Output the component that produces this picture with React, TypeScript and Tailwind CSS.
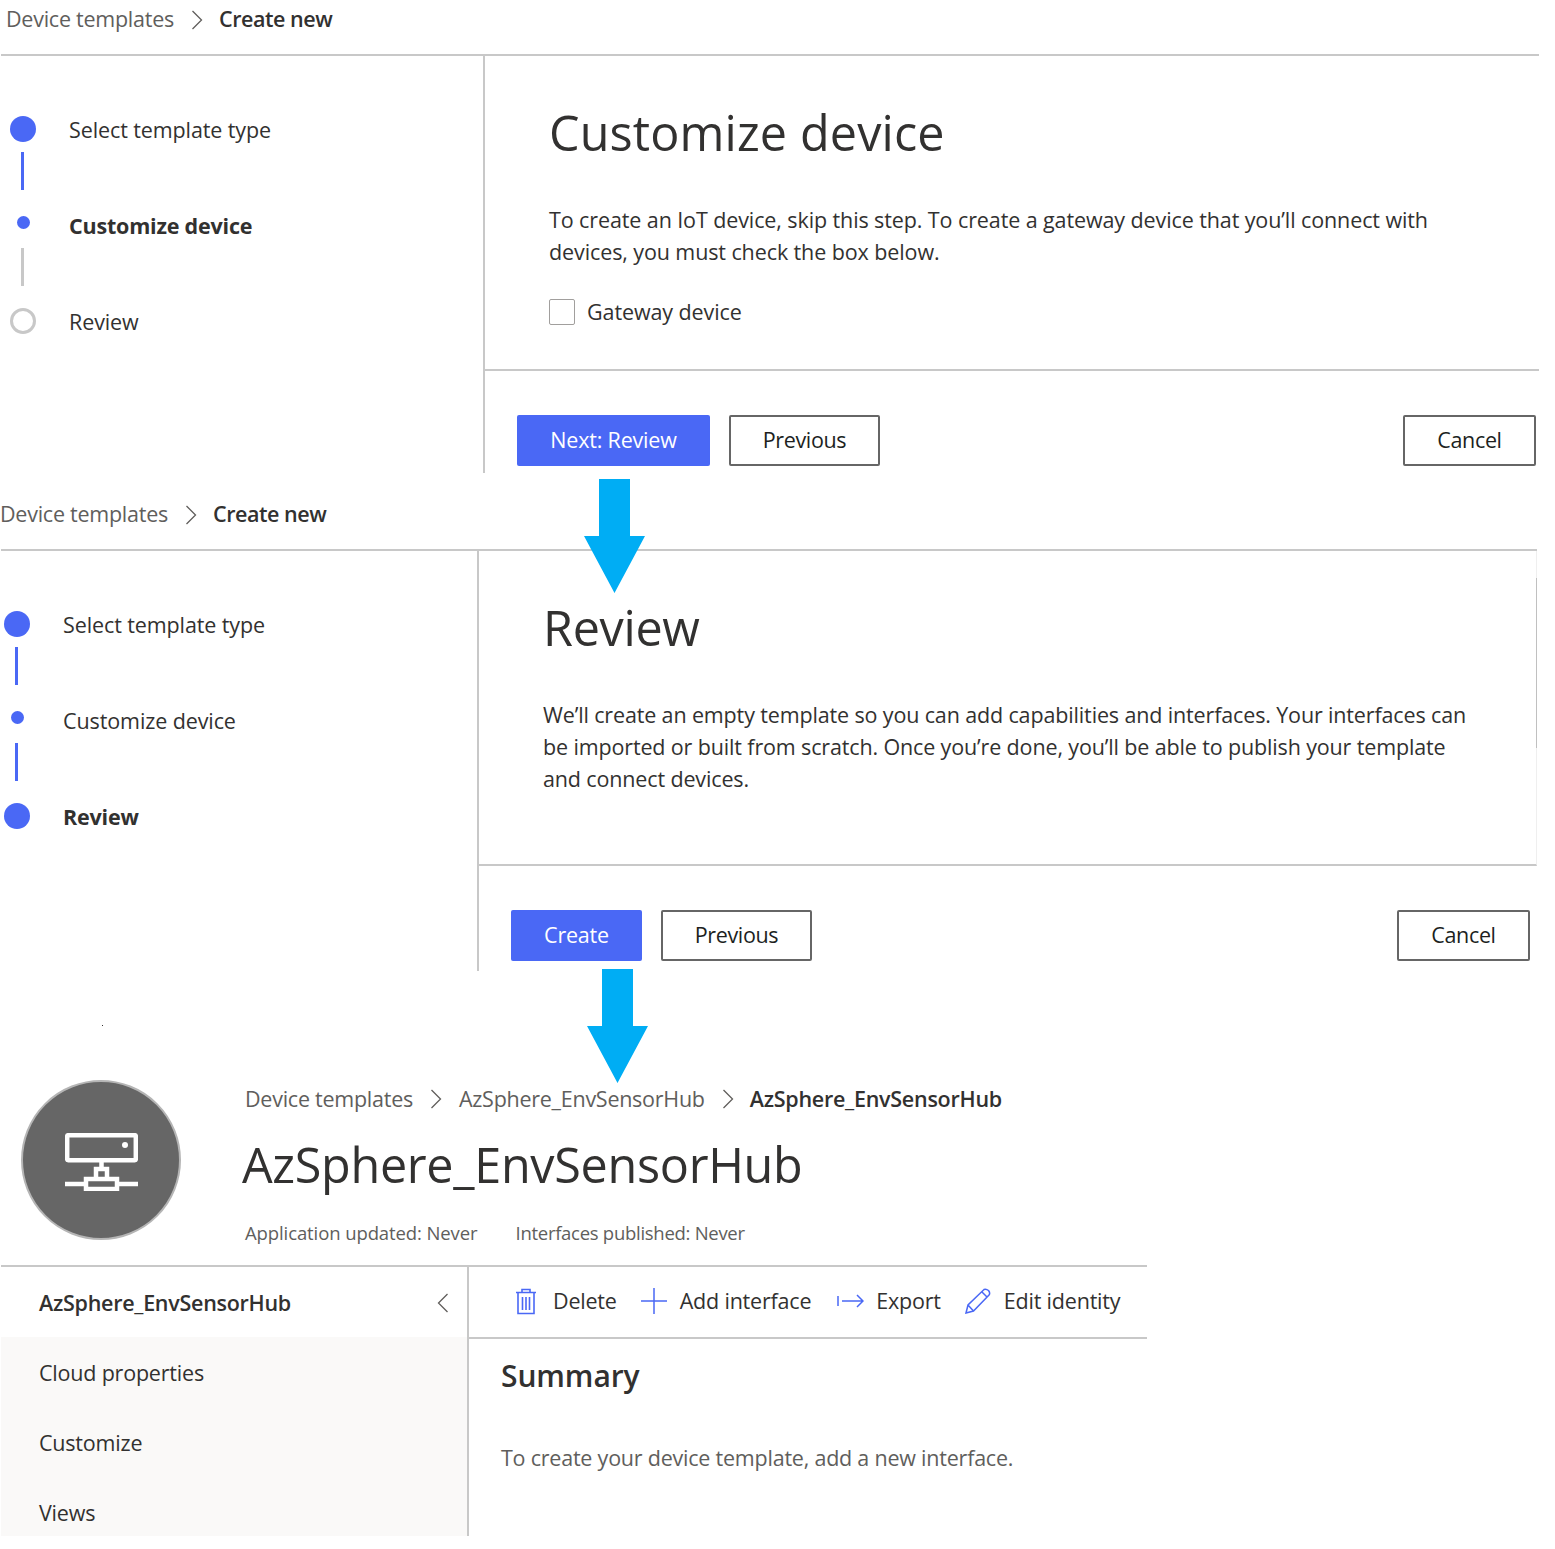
import type { ReactNode } from "react";

const font = "font-['Open_Sans','Noto_Sans',sans-serif]";

function Chevron({ className = "" }: { className?: string }) {
  return (
    <svg width="12" height="20" viewBox="0 0 12 20" fill="none" stroke="#605e5c" strokeWidth="1.3" className={className}>
      <path d="M1.5 1 L10.5 10 L1.5 19" />
    </svg>
  );
}

function Crumbs() {
  return (
    <div className="flex h-[54px] items-center pb-[15px] text-[21.5px]">
      <span className="tracking-[-0.25px] text-[#605e5c]">Device templates</span>
      <Chevron className="ml-[17px] mr-[16px]" />
      <span className="font-semibold tracking-[-0.45px] text-[#323130]">Create new</span>
    </div>
  );
}

function Line({ on }: { on: boolean }) {
  return <div className={`mb-[22px] ml-[11px] mt-[10px] h-[38px] w-[3px] ${on ? "bg-[#4a68f5]" : "bg-[#c8c8c8]"}`} />;
}

function Step({ dot, label, bold }: { dot: ReactNode; label: string; bold?: boolean }) {
  return (
    <div className="flex h-[26px] items-center">
      <div className="flex w-[26px] items-center justify-center">{dot}</div>
      <span className={`ml-[33px] mt-[2px] text-[21.5px] text-[#323130] ${bold ? "font-bold tracking-[-0.2px]" : "tracking-[-0.1px]"}`}>{label}</span>
    </div>
  );
}

const bigDot = <div className="h-[26px] w-[26px] rounded-full bg-[#4a68f5]" />;
const smallDot = <div className="mb-[6px] h-[13px] w-[13px] rounded-full bg-[#4a68f5]" />;
const ring = <div className="h-[26px] w-[26px] rounded-full border-[3px] border-[#c8c8c8]" />;

function Btn({ children, primary, className = "" }: { children: ReactNode; primary?: boolean; className?: string }) {
  return (
    <div
      className={`flex h-[51px] items-center justify-center rounded-[2px] text-[21.5px] ${
        primary ? "bg-[#4a68f5] tracking-[-0.2px] text-white" : "border-2 border-[#666666] tracking-[-0.35px] text-[#201f1e]"
      } ${className}`}
    >
      {children}
    </div>
  );
}

function Wizard({
  shift,
  width,
  railWidth,
  bodyHeight,
  footerPad,
  steps,
  title,
  titleClass,
  children,
  primary,
  primaryWidth,
  rightBorder,
}: {
  shift: string;
  width: string;
  railWidth: string;
  bodyHeight: string;
  footerPad: string;
  steps: ReactNode;
  title: string;
  titleClass: string;
  children: ReactNode;
  primary: string;
  primaryWidth: string;
  rightBorder?: boolean;
}) {
  return (
    <div className={width}>
      <div className={shift}>
        <Crumbs />
      </div>
      <div className={`ml-px flex border-t-2 border-[#c8c8c8] ${bodyHeight}`}>
        <div className={`${shift} -ml-px ${railWidth} shrink-0 pt-[60px]`}>{steps}</div>
        <div className="flex min-w-0 flex-1 flex-col border-l-2 border-[#c8c8c8]">
          <div className={`h-[315px] border-b-2 border-[#c8c8c8] pl-[64px] ${rightBorder ? "border-r border-r-[#efefef]" : ""}`}>
            <h1 className={`mt-[36px] text-[48.5px] leading-[80px] text-[#323130] ${titleClass}`}>{title}</h1>
            {children}
          </div>
          <div className={`flex items-start pl-[32px] pt-[44px] ${footerPad}`}>
            <Btn primary className={primaryWidth}>{primary}</Btn>
            <Btn className="ml-[19px] w-[151px]">Previous</Btn>
            <Btn className="ml-auto w-[133px]">Cancel</Btn>
          </div>
        </div>
      </div>
    </div>
  );
}

function DownArrow({ className }: { className: string }) {
  return (
    <svg width="62" height="115" viewBox="0 0 62 115" className={`absolute ${className}`}>
      <polygon points="15,0 46,0 46,57 61,57 30.5,114 0,57 15,57" fill="#00adf4" />
    </svg>
  );
}

function ToolBtn({ icon, label, className = "" }: { icon: ReactNode; label: string; className?: string }) {
  return (
    <div className={`flex items-center ${className}`}>
      {icon}
      <span className="text-[21.5px] tracking-[-0.2px] text-[#323130]">{label}</span>
    </div>
  );
}

export default function App() {
  return (
    <div className={`relative h-[1549px] w-[1555px] overflow-hidden bg-white ${font}`}>
      <Wizard
        shift="pl-[6px]"
        width="w-[1539px]"
        railWidth="w-[483px]"
        bodyHeight="h-[419px]"
        footerPad="pr-[3px]"
        title="Customize device"
        titleClass="tracking-[0.14px]"
        primary="Next: Review"
        primaryWidth="w-[193px]"
        steps={
          <div className="pl-[4px]">
            <Step dot={bigDot} label="Select template type" />
            <Line on />
            <Step dot={smallDot} label="Customize device" bold />
            <Line on={false} />
            <Step dot={ring} label="Review" />
          </div>
        }
      >
        <p className="mt-[32px] w-[900px] text-[21.5px] leading-[32px] tracking-[-0.1px] text-[#323130]">
          To create an IoT device, skip this step. To create a gateway device that you’ll connect with devices, you must check the box below.
        </p>
        <div className="mt-[28px] flex items-center">
          <div className="h-[26px] w-[26px] rounded-[2px] border border-[#a19f9d]" />
          <span className="ml-[12px] text-[21.5px] tracking-[-0.1px] text-[#323130]">Gateway device</span>
        </div>
      </Wizard>

      <div className="h-[22px]" />

      <Wizard
        shift="pl-0"
        width="w-[1537px]"
        railWidth="w-[477px]"
        bodyHeight="h-[422px]"
        footerPad="pr-[7px]"
        title="Review"
        titleClass="tracking-[-0.3px]"
        primary="Create"
        primaryWidth="w-[131px]"
        rightBorder
        steps={
          <div className="pl-[4px]">
            <Step dot={bigDot} label="Select template type" />
            <Line on />
            <Step dot={smallDot} label="Customize device" />
            <Line on />
            <Step dot={bigDot} label="Review" bold />
          </div>
        }
      >
        <p className="mt-[32px] w-[935px] text-[21.5px] leading-[32px] tracking-[-0.14px] text-[#323130]">
          We’ll create an empty template so you can add capabilities and interfaces. Your interfaces can be imported or built from scratch. Once you’re done, you’ll be able to publish your template and connect devices.
        </p>
      </Wizard>

      <div className="absolute left-[1536px] top-[578px] h-[170px] w-px bg-[#c0c0c0]" />
      <DownArrow className="left-[584px] top-[479px]" />
      <DownArrow className="left-[587px] top-[969px]" />
      <div className="absolute left-[102px] top-[1025px] h-px w-px bg-[#323130]" />

      {/* template page */}
      <div className="mt-[109px] w-[1147px]">
        <div className="flex h-[185px] pl-[21px]">
          <div className="flex h-[160px] w-[160px] shrink-0 items-center justify-center rounded-full border-2 border-[#b5b5b5] bg-[#666666]">
            <svg width="73" height="58" viewBox="0 0 73 58" fill="none" stroke="white" strokeWidth="4.5" className="ml-px mt-[3px]">
              <rect x="2.2" y="2.2" width="68.6" height="25" rx="1" />
              <circle cx="60" cy="12" r="3" fill="white" stroke="none" />
              <path d="M36.5 28 V37 M31 46 V36 H42 V46" />
              <path d="M21 46 H52 V56 H21 Z" />
              <path d="M0 51 H19 M54 51 H73" />
            </svg>
          </div>
          <div className="ml-[62px] min-w-0 flex-1 pt-[4px]">
            <div className="flex h-[30px] items-center text-[21.5px] text-[#605e5c]">
              <span className="ml-[2px] tracking-[-0.25px]">Device templates</span>
              <Chevron className="ml-[17px] mr-[17px]" />
              <span className="tracking-[-0.26px]">AzSphere_EnvSensorHub</span>
              <Chevron className="ml-[17px] mr-[16px]" />
              <span className="font-semibold tracking-[-0.26px] text-[#323130]">AzSphere_EnvSensorHub</span>
            </div>
            <div className="-ml-px mt-[12px] text-[48.5px] leading-[76px] tracking-[-0.3px] text-[#323130]">AzSphere_EnvSensorHub</div>
            <div className="ml-[2px] mt-[17px] flex text-[18.5px] text-[#605e5c]">
              <span className="tracking-[-0.1px]">Application updated: Never</span>
              <span className="ml-[38px] tracking-[-0.28px]">Interfaces published: Never</span>
            </div>
          </div>
        </div>

        <div className="ml-px flex h-[271px] border-t-2 border-[#c8c8c8]">
          <div className="flex w-[466px] shrink-0 flex-col overflow-hidden">
            <div className="flex h-[70px] shrink-0 items-center justify-between pl-[38px] pr-[18px] pt-[2px]">
              <span className="text-[21.5px] font-semibold tracking-[-0.27px] text-[#323130]">AzSphere_EnvSensorHub</span>
              <svg width="12" height="20" viewBox="0 0 12 20" fill="none" stroke="#605e5c" strokeWidth="1.3">
                <path d="M10.5 1 L1.5 10 L10.5 19" />
              </svg>
            </div>
            <div className="flex-1 bg-[#faf9f8] pl-[38px] pt-px text-[21.5px] tracking-[-0.2px] text-[#323130]">
              <div className="flex h-[70px] items-center">Cloud properties</div>
              <div className="flex h-[70px] items-center">Customize</div>
              <div className="flex h-[70px] items-center">Views</div>
            </div>
          </div>
          <div className="min-w-0 flex-1 border-l-2 border-[#c8c8c8]">
            <div className="flex h-[72px] items-center border-b-2 border-[#c8c8c8] pb-[2px] pl-[46px]">
              <ToolBtn
                label="Delete"
                icon={
                  <svg width="22" height="27" viewBox="0 0 22 27" fill="none" stroke="#4a68f5" strokeWidth="1.6" className="mr-[16px]">
                    <path d="M1 4.5 H21 M7 4.5 V1.5 H15 V4.5 M3 4.5 V25.5 H19 V4.5 M7.5 9 V22 M11 9 V22 M14.5 9 V22" />
                  </svg>
                }
              />
              <ToolBtn
                className="ml-[24px]"
                label="Add interface"
                icon={
                  <svg width="26" height="26" viewBox="0 0 26 26" fill="none" stroke="#4a68f5" strokeWidth="1.5" className="mr-[13px]">
                    <path d="M13 0 V26 M0 13 H26" />
                  </svg>
                }
              />
              <ToolBtn
                className="ml-[26px]"
                label="Export"
                icon={
                  <svg width="27" height="14" viewBox="0 0 27 14" fill="none" stroke="#4a68f5" strokeWidth="1.5" className="mr-[12px]">
                    <path d="M1 2 V12 M5 7 H26 M20 1 L26 7 L20 13" />
                  </svg>
                }
              />
              <ToolBtn
                className="ml-[24px]"
                label="Edit identity"
                icon={
                  <svg width="26" height="26" viewBox="0 0 26 26" fill="none" stroke="#4a68f5" strokeWidth="1.5" className="mr-[13px]">
                    <path d="M1 25 L3 17 L19 1.5 Q21 0.5 23.5 2.5 Q25.5 5 24 7 L8.5 23 Z M3 17 L8.5 23 M17 4 L22 9" />
                  </svg>
                }
              />
            </div>
            <div className="pl-[32px]">
              <div className="mt-[15px] text-[30px] font-semibold leading-[44px] tracking-[-0.1px] text-[#323130]">Summary</div>
              <div className="mt-[44px] text-[21.5px] tracking-[-0.22px] text-[#605e5c]">To create your device template, add a new interface.</div>
            </div>
          </div>
        </div>
      </div>
    </div>
  );
}
